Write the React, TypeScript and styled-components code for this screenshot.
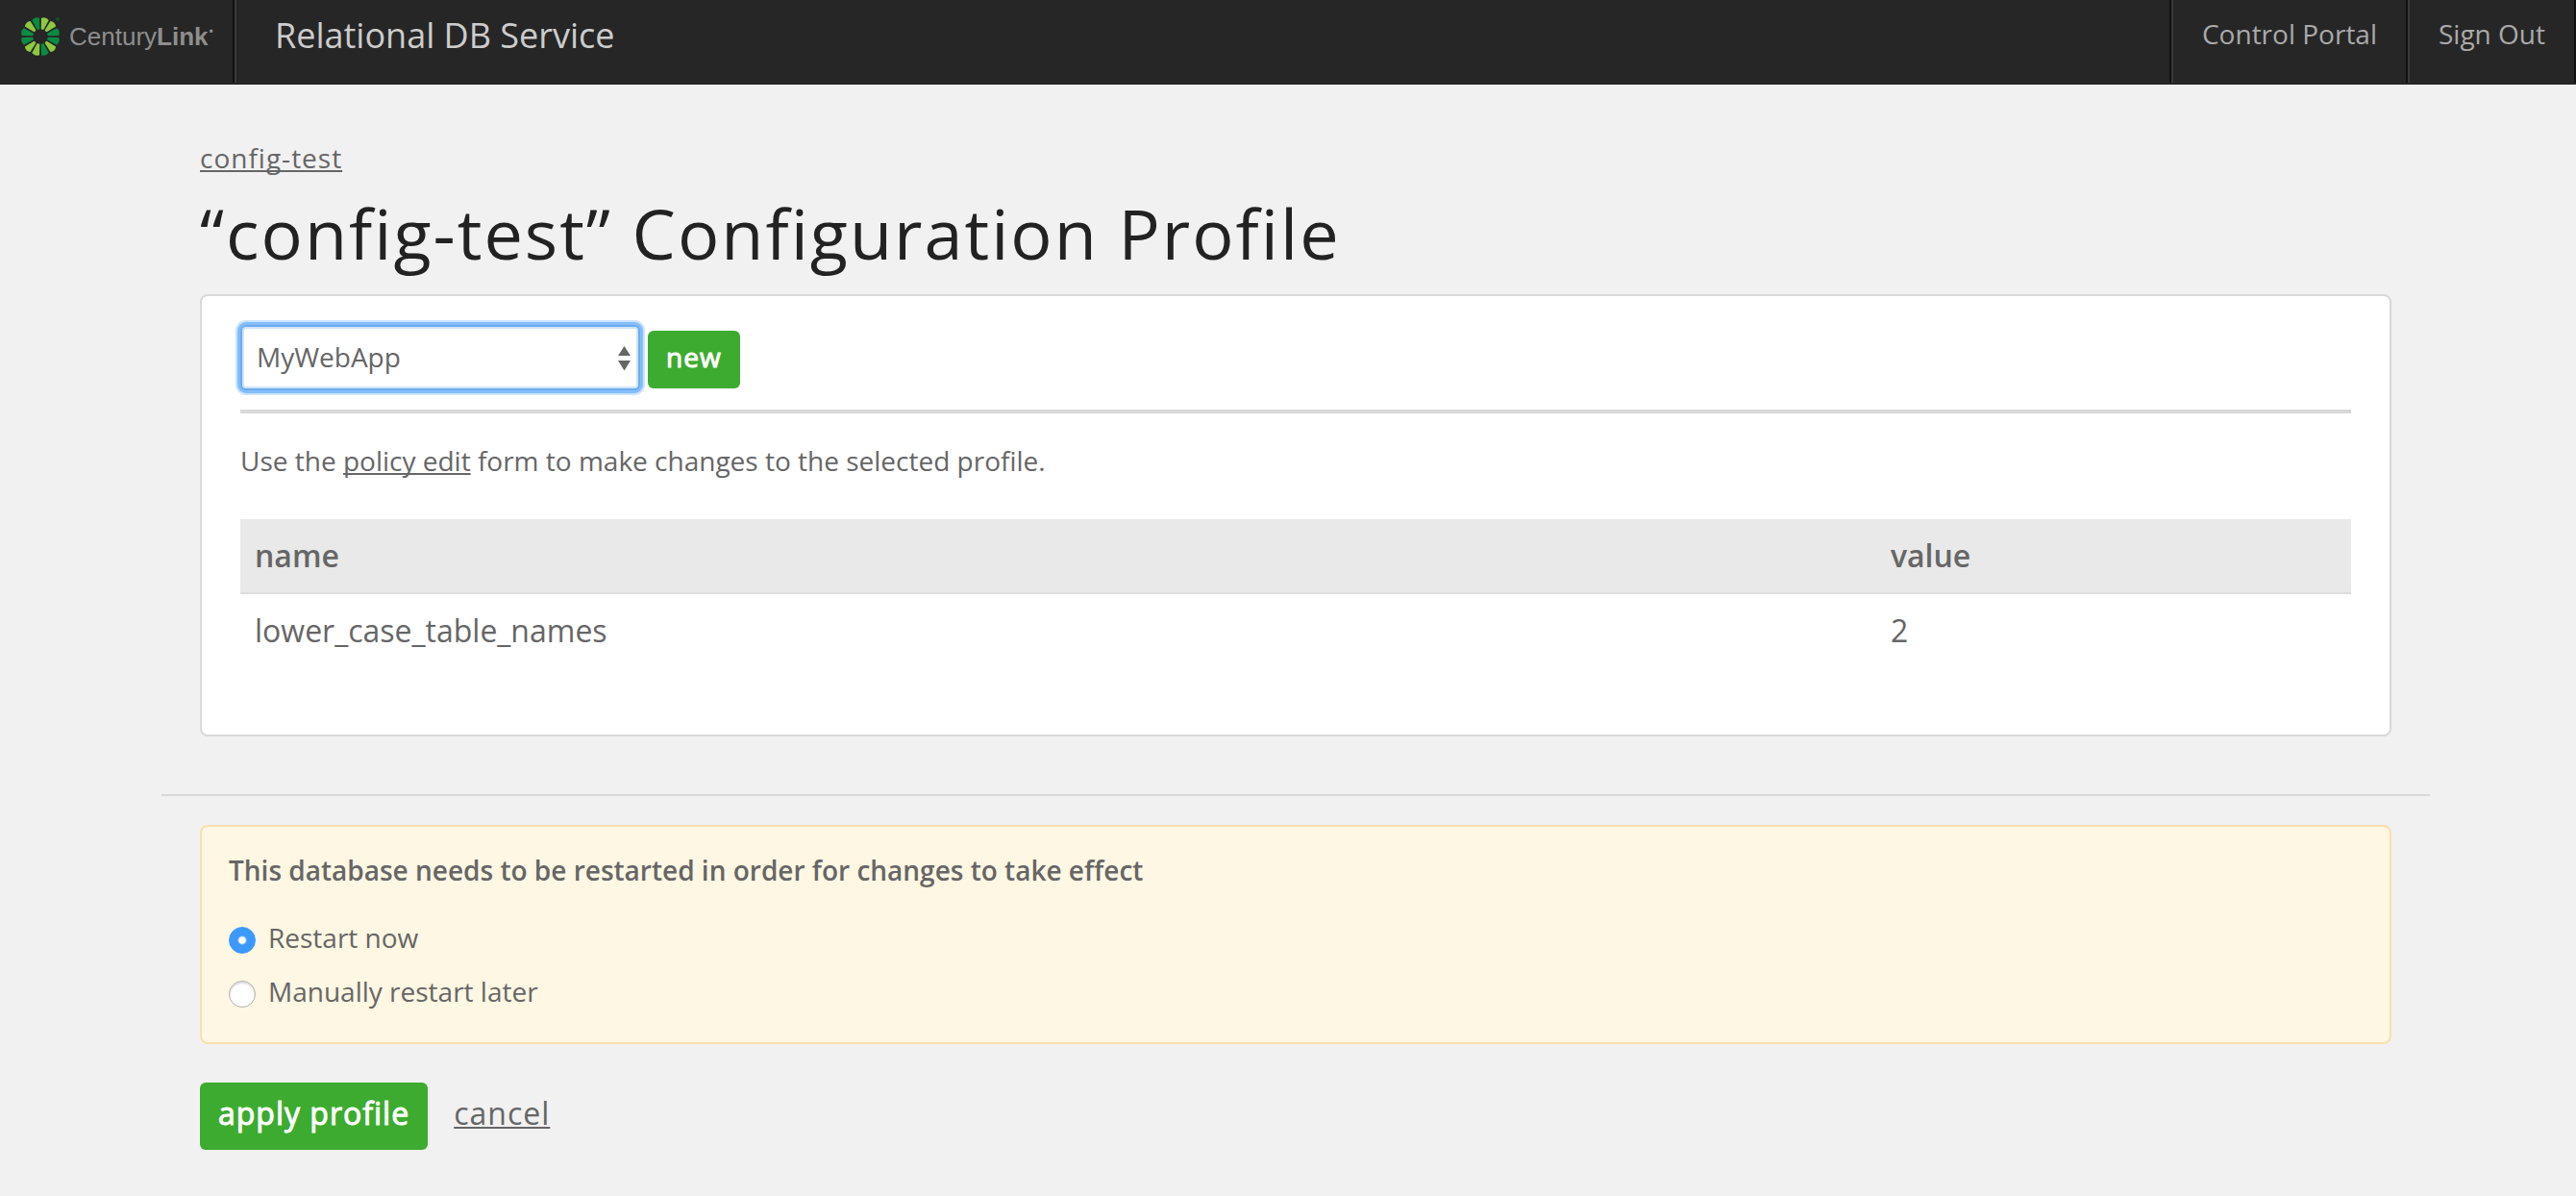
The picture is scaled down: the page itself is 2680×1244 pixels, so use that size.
import React, { useState } from "react";
import styled, { createGlobalStyle } from "styled-components";

const GlobalStyle = createGlobalStyle`
  * { box-sizing: border-box; }
  body {
    margin: 0;
    background: #f1f1f1;
    color: #666;
    font: 28px/42px "Open Sans", "Noto Sans", sans-serif;
  }
`;

const Header = styled.header`
  display: flex;
  justify-content: space-between;
  background: #262626;
  padding-bottom: 2px;
`;

const HeaderGroup = styled.div`
  display: flex;
`;

const Brand = styled.a`
  display: flex;
  align-items: flex-start;
  gap: 10px;
  width: 244px;
  height: 86px;
  padding: 18px 0 0 22px;
  border-right: 2px solid #111;
  color: #8e8e8e;
  text-decoration: none;
`;

const BrandName = styled.span`
  font-family: "Liberation Sans", Arial, sans-serif;
  font-size: 26px;
  line-height: 40px;
  white-space: nowrap;
`;

const Registered = styled.sup`
  margin-left: 1px;
  font-size: 12px;
  line-height: 12px;
`;

const Product = styled.div`
  padding-left: 40px;
  border-left: 2px solid #3a3a3a;
  color: #ccc;
  font-size: 36px;
  line-height: 74px;
`;

const HeaderLink = styled.a`
  padding: 0 30px;
  border-left: 2px solid #3a3a3a;
  border-right: 2px solid #111;
  color: #aaa;
  line-height: 70px;
  text-decoration: none;

  &:first-child {
    box-shadow: -2px 0 0 #111;
  }
`;

const Main = styled.main`
  padding: 56px 152px 46px 168px;
`;

const Section = styled.section`
  padding: 0 40px;
`;

const Link = styled.a`
  color: #666;
  text-decoration: underline 2px;
  text-underline-offset: 2px;
  text-decoration-skip-ink: none;
`;

const Crumb = styled(Link)`
  display: block;
  width: fit-content;
  line-height: 40px;
  letter-spacing: 1px;
`;

const Title = styled.h1`
  margin: 18px 0 24px;
  color: #222;
  font-size: 72px;
  font-weight: 400;
  line-height: 80px;
  letter-spacing: 2px;
`;

const Card = styled.div`
  padding: 30px 40px 40px;
  border: 2px solid #d9d9d9;
  border-radius: 8px;
  background: #fff;
`;

const PickerRow = styled.div`
  display: flex;
  align-items: baseline;
  gap: 8px;
  padding-bottom: 20px;
  border-bottom: 4px solid #d9d9d9;
`;

const SelectBox = styled.div`
  position: relative;
  width: 416px;
  height: 68px;
`;

const Select = styled.select`
  appearance: none;
  width: 100%;
  height: 68px;
  padding: 0 40px 2px 15px;
  border: 2px solid #ccc;
  border-radius: 6px;
  background: #fff;
  color: #666;
  font: inherit;

  &:focus {
    outline: none;
    border-color: #70abe9;
    box-shadow: 0 0 0 3px #83bdff, 0 0 0 5px #cce3ff, inset 0 0 0 2px #cee4fc;
  }
`;

const SelectArrows = styled.svg`
  position: absolute;
  top: 22px;
  right: 10px;
  width: 13px;
  height: 26px;
  pointer-events: none;
`;

const Button = styled.button<{ $large?: boolean }>`
  padding: ${(p) => (p.$large ? "11px 19px 17px" : "7px 19px 13px")};
  border: 0;
  border-radius: 6px;
  background: #3dab2f;
  color: #fff;
  font: inherit;
  font-size: ${(p) => (p.$large ? "32px" : "28px")};
  line-height: ${(p) => (p.$large ? "42px" : "40px")};
  letter-spacing: 1px;
  -webkit-text-stroke: 1px #fff;
  cursor: pointer;
`;

const Hint = styled.p`
  margin: 28px 0 40px;
`;

const Table = styled.table`
  width: 100%;
  margin-bottom: 30px;
  border-collapse: collapse;
  font-size: 32px;
  line-height: 48px;
  text-align: left;
`;

const HeadCell = styled.th`
  padding: 14px 15px;
  border-bottom: 2px solid #ddd;
  background: #e9e9e9;
  font-weight: 600;

  &:first-child {
    width: 77.5%;
  }
`;

const Cell = styled.td`
  padding: 14px 15px;
`;

const Divider = styled.hr`
  height: 2px;
  margin: 60px 0 30px;
  border: 0;
  background: #d9d9d9;
`;

const Notice = styled.fieldset`
  margin: 0;
  padding: 24px 28px 32px;
  border: 2px solid #f9dfae;
  border-radius: 8px;
  background: #fdf7e3;
`;

const NoticeTitle = styled.legend`
  float: left;
  width: 100%;
  margin-bottom: 28px;
  padding: 0;
  font-weight: 600;
`;

const Options = styled.div`
  display: flex;
  clear: both;
  flex-direction: column;
  align-items: flex-start;
  gap: 14px;
`;

const Option = styled.label`
  display: flex;
  align-items: center;
  gap: 13px;
`;

const Radio = styled.input`
  appearance: none;
  width: 28px;
  height: 28px;
  margin: 6px 0 0;
  border: 1px solid #b0b0b0;
  border-radius: 50%;
  background: #fff;
  box-shadow: inset 0 2px 2px #ddd;

  &:checked {
    border-color: #3b99fc;
    background: radial-gradient(circle, #fff 3px, #3b99fc 5px);
    box-shadow: none;
  }
`;

const Actions = styled.div`
  display: flex;
  align-items: baseline;
  gap: 27px;
  margin-top: 40px;
`;

const Cancel = styled(Link)`
  font-size: 32px;
  letter-spacing: 1px;
`;

const DARK = "#0b8a43";
const LIGHT = "#8fc842";
const PETALS = [LIGHT, LIGHT, DARK, DARK, LIGHT, DARK, LIGHT, LIGHT, DARK, DARK, LIGHT, DARK];

function Sunburst() {
  return (
    <svg width="40" height="40" viewBox="0 0 40 40" aria-hidden="true">
      {PETALS.map((fill, i) => (
        <path
          key={i}
          d="M-1.4-8 L-4-18.800 Q0-21.800 4-18.800 L1.400-8 Q0-7 -1.400-8Z"
          fill={fill}
          transform={`translate(20 20) rotate(${15 + i * 30})`}
        />
      ))}
      <circle cx="38" cy="2" r="2" fill="#12502f" />
    </svg>
  );
}

const profiles = ["MyWebApp"];
const settings = [{ name: "lower_case_table_names", value: "2" }];
const restartOptions = [
  { id: "now", label: "Restart now" },
  { id: "later", label: "Manually restart later" },
];

export default function App() {
  const [profile, setProfile] = useState(profiles[0]);
  const [restart, setRestart] = useState("now");

  return (
    <>
      <GlobalStyle />
      <Header>
        <HeaderGroup>
          <Brand href="#home">
            <Sunburst />
            <BrandName>
              Century<b>Link</b>
              <Registered>•</Registered>
            </BrandName>
          </Brand>
          <Product>Relational DB Service</Product>
        </HeaderGroup>
        <HeaderGroup as="nav">
          <HeaderLink href="#portal">Control Portal</HeaderLink>
          <HeaderLink href="#signout">Sign Out</HeaderLink>
        </HeaderGroup>
      </Header>

      <Main>
        <Section>
          <Crumb href="#instance">config-test</Crumb>
          <Title>“config-test” Configuration Profile</Title>
          <Card>
            <PickerRow>
              <SelectBox>
                <Select
                  autoFocus
                  aria-label="Configuration profile"
                  value={profile}
                  onChange={(e) => setProfile(e.target.value)}
                >
                  {profiles.map((p) => (
                    <option key={p}>{p}</option>
                  ))}
                </Select>
                <SelectArrows viewBox="0 0 13 26" aria-hidden="true">
                  <path d="M6.500 0 L13 10H0ZM6.500 25.500 L13 15H0Z" fill="#666" />
                </SelectArrows>
              </SelectBox>
              <Button type="button">new</Button>
            </PickerRow>
            <Hint>
              Use the <Link href="#policy">policy edit</Link> form to make changes to the selected
              profile.
            </Hint>
            <Table>
              <thead>
                <tr>
                  <HeadCell scope="col">name</HeadCell>
                  <HeadCell scope="col">value</HeadCell>
                </tr>
              </thead>
              <tbody>
                {settings.map((s) => (
                  <tr key={s.name}>
                    <Cell>{s.name}</Cell>
                    <Cell>{s.value}</Cell>
                  </tr>
                ))}
              </tbody>
            </Table>
          </Card>
        </Section>

        <Divider />

        <Section>
          <Notice>
            <NoticeTitle>
              This database needs to be restarted in order for changes to take effect
            </NoticeTitle>
            <Options>
              {restartOptions.map((o) => (
                <Option key={o.id}>
                  <Radio
                    type="radio"
                    name="restart"
                    value={o.id}
                    checked={restart === o.id}
                    onChange={() => setRestart(o.id)}
                  />
                  {o.label}
                </Option>
              ))}
            </Options>
          </Notice>
          <Actions>
            <Button type="submit" $large>
              apply profile
            </Button>
            <Cancel href="#cancel">cancel</Cancel>
          </Actions>
        </Section>
      </Main>
    </>
  );
}
